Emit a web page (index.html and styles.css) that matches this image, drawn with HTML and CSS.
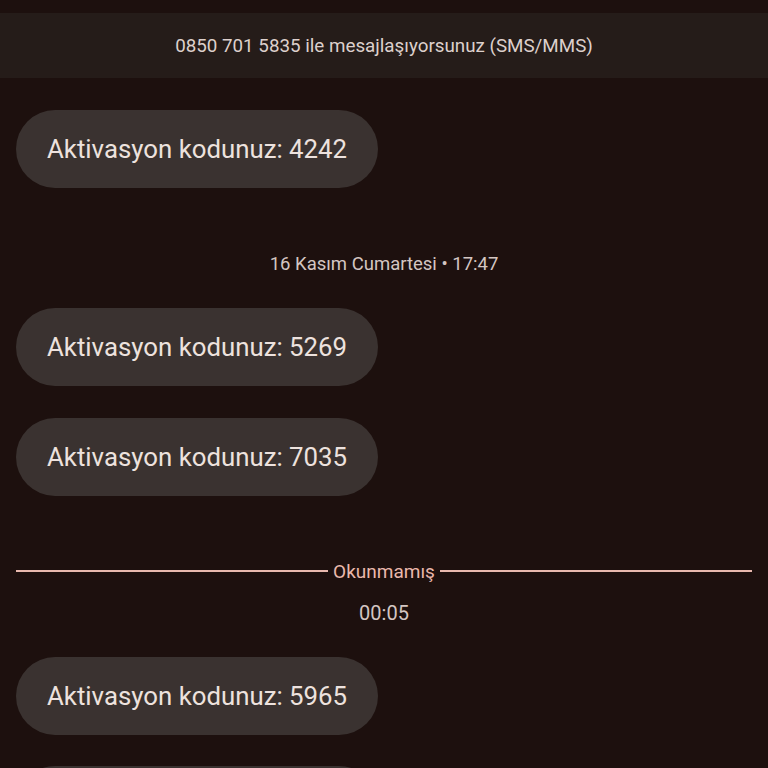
FILE: index.html
```
<!DOCTYPE html>
<html lang="tr">
<head>
<meta charset="utf-8">
<link rel="stylesheet" href="styles.css">
</head>
<body>
<div class="screen">
  <div class="banner">0850 701 5835 ile mesajlaşıyorsunuz (SMS/MMS)</div>
  <div class="thread">
    <div class="bubble b1">Aktivasyon kodunuz: 4242</div>
    <div class="stamp date">16 Kasım Cumartesi • 17:47</div>
    <div class="bubble b2">Aktivasyon kodunuz: 5269</div>
    <div class="bubble b3">Aktivasyon kodunuz: 7035</div>
    <div class="unread"><span class="line"></span><span class="label">Okunmamış</span><span class="line"></span></div>
    <div class="stamp time">00:05</div>
    <div class="bubble b4">Aktivasyon kodunuz: 5965</div>
    <div class="bubble b5"></div>
  </div>
</div>
</body>
</html>
```
FILE: styles.css
```
html, body {
  margin: 0;
  padding: 0;
  background: #1d100e;
  overflow: hidden;
}
.screen {
  width: 768px;
  height: 768px;
  overflow: hidden;
  font-family: Roboto, "Noto Sans", sans-serif;
  padding-top: 13px;
  box-sizing: border-box;
}
.banner {
  height: 65px;
  background: #251c19;
  color: #ddd0cc;
  font-size: 18.8px;
  display: flex;
  align-items: center;
  justify-content: center;
  white-space: nowrap;
}
.thread {
  display: flex;
  flex-direction: column;
  align-items: flex-start;
  padding: 0 16px;
}
.bubble {
  height: 78px;
  box-sizing: border-box;
  border-radius: 39px;
  background: #3a3230;
  color: #ede2de;
  font-size: 25.8px;
  display: flex;
  align-items: center;
  padding: 0 24px 0 31px;
  width: 362px;
  flex: none;
  white-space: nowrap;
}
.b1 { margin-top: 32px; }
.b2 { margin-top: 34px; }
.b3 { margin-top: 32px; }
.b4 { margin-top: 33px; }
.b5 { margin-top: 31px; }
.stamp {
  align-self: stretch;
  text-align: center;
  color: #d4c6c2;
  white-space: nowrap;
}
.date {
  font-size: 18.5px;
  margin-top: 66px;
  line-height: 20px;
}
.time {
  font-size: 20px;
  margin-top: 20px;
  line-height: 22px;
}
.unread {
  align-self: stretch;
  display: flex;
  align-items: center;
  gap: 5px;
  margin-top: 64px;
  height: 22px;
}
.unread .line {
  flex: 1;
  height: 2px;
  background: #e9b9ae;
}
.unread .label {
  color: #eab8ac;
  font-size: 19px;
}
```
